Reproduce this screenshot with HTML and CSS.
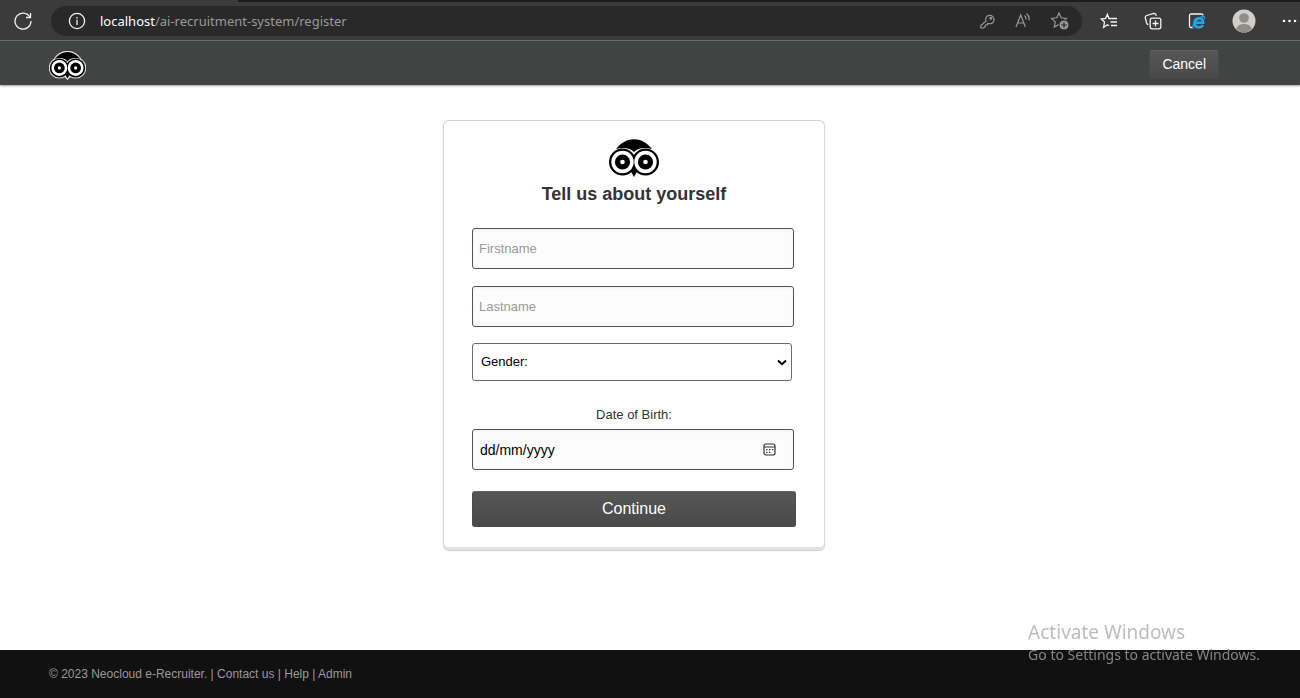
FILE: index.html
```
<!DOCTYPE html>
<html lang="en">
<head>
<meta charset="utf-8">
<title>Register</title>
<link rel="stylesheet" href="styles.css">
</head>
<body>
<svg class="defs" aria-hidden="true">
  <symbol id="owl" viewBox="0 0 50 38">
    <path d="M7 10C17 -3 33 -3 43 10C35 8 29 9 25 13C21 9 15 8 7 10Z" fill="#000"/>
    <circle cx="13.5" cy="23" r="13.5" fill="#000"/>
    <circle cx="36.5" cy="23" r="13.5" fill="#000"/>
    <path d="M21 31L25 38L29 31L25 25Z" fill="#000"/>
    <circle cx="13.5" cy="23" r="11.2" fill="#fff"/>
    <circle cx="36.5" cy="23" r="11.2" fill="#fff"/>
    <circle cx="13.5" cy="23" r="7.6" fill="#000"/>
    <circle cx="36.5" cy="23" r="7.6" fill="#000"/>
    <circle cx="13.5" cy="23" r="2.3" fill="#fff"/>
    <circle cx="36.5" cy="23" r="2.3" fill="#fff"/>
  </symbol>
</svg>
<div class="browser">
  <button class="tool reload" aria-label="Reload">
    <svg width="18" height="18" viewBox="0 0 18 18"><path d="M16 5.2A8 8 0 1 0 17 9M16.5 1v4.5H12"/></svg>
  </button>
  <div class="address">
    <svg class="info" width="18" height="18" viewBox="0 0 18 18"><circle cx="9" cy="9" r="7.6"/><path d="M9 7.7V13M9 5v1.4"/></svg>
    <span class="url"><b>localhost</b>/ai-recruitment-system/register</span>
    <button class="tool dim" aria-label="Saved passwords">
      <svg width="18" height="18" viewBox="0 0 18 18"><path d="M8 9.2A4.2 4.2 0 1 1 10.8 11.6L9.6 11.4L9.2 13H7.6L7 14.8L5.5 16H2.8V13.6Z"/><circle cx="12.8" cy="6.2" r="0.9"/></svg>
    </button>
    <button class="tool dim" aria-label="Read aloud">
      <svg width="18" height="18" viewBox="0 0 18 18"><path d="M2 15L6.7 3L11.4 15M3.7 11H9.8M10.5 3.5Q12.2 5 12 7.5M12.5 1.5Q15.7 4 15 8.3"/></svg>
    </button>
    <button class="tool dim" aria-label="Add to favorites">
      <svg width="20" height="20" viewBox="0 0 20 20"><path d="M9 2L11.2 6.8L16.4 7.4L12.7 11L13.2 15.5L9 13.4L4.3 16L5.2 10.9L1.6 7.4L6.8 6.8Z"/><circle class="badge" cx="14" cy="14" r="5"/><path class="plus" d="M14 11.2v5.6M11.2 14h5.6"/></svg>
    </button>
  </div>
  <button class="tool" aria-label="Favorites">
    <svg width="18" height="18" viewBox="0 0 18 18"><path d="M11 6.5H9L7.4 2.2L5.6 6.5L1.3 7L4.5 10L3.6 15.4L7.4 12.8L9 13.7M11.2 6.5H17M10.5 10H17M11 13.5H17"/></svg>
  </button>
  <button class="tool" aria-label="Collections">
    <svg width="18" height="18" viewBox="0 0 18 18"><rect x="6.2" y="6.2" width="10.6" height="10.6" rx="2"/><path d="M11.5 8.5v6M8.5 11.5h6M4.4 12.6Q3 12.4 2.6 11L1.3 5.8Q1 4 2.7 3.5L9.7 1.5Q11.2 1.2 11.9 2.6L12.2 3.9"/></svg>
  </button>
  <button class="tool" aria-label="Internet Explorer mode">
    <svg width="18" height="18" viewBox="0 0 18 18"><path d="M4 15.5H3Q1.5 15.5 1.5 14V3.5Q1.5 2 3 2H13.5Q15 2 15 3.5"/><path class="ie" d="M6.5 10.7H15.2Q15 6.3 11 6.3Q6.5 6.5 6.5 11Q7 15.5 11.2 15.3Q14 15 15 13"/><path class="swoosh" d="M6 16Q3.5 17 5.5 12.5Q9 6.5 14.5 4.7Q17.5 3.9 16.2 7"/></svg>
  </button>
  <button class="tool profile" aria-label="Profile">
    <svg width="24" height="24" viewBox="0 0 24 24"><circle cx="12" cy="12" r="11.5" fill="#d1cfcb"/><circle cx="12" cy="9" r="4.8" fill="#918d89"/><path d="M4 20Q6 15 12 15Q18 15 20 20Q12 27 4 20Z" fill="#918d89"/></svg>
  </button>
  <button class="tool more" aria-label="More">
    <svg width="18" height="18" viewBox="0 0 18 18"><circle cx="4" cy="9" r="1.3"/><circle cx="9.5" cy="9" r="1.3"/><circle cx="15" cy="9" r="1.3"/></svg>
  </button>
</div>
<header class="header">
  <div class="container bar">
    <a href="#" class="home" aria-label="Home">
      <svg class="logo" width="37" height="29" viewBox="-1 -1 52 41">
        <g fill="none" stroke="#ddd" stroke-width="3"><path d="M7 10C17 -3 33 -3 43 10"/><circle cx="13.5" cy="23" r="13.5"/><circle cx="36.5" cy="23" r="13.5"/><path d="M21 34L25 38L29 34"/></g>
        <use href="#owl" width="50" height="38"/>
      </svg>
    </a>
    <button class="btn cancel">Cancel</button>
  </div>
</header>
<main class="main">
  <form class="card">
    <svg class="owl" width="50" height="38"><use href="#owl"/></svg>
    <h1>Tell us about yourself</h1>
    <input class="field" type="text" placeholder="Firstname" aria-label="Firstname">
    <input class="field" type="text" placeholder="Lastname" aria-label="Lastname">
    <div class="select-box">
      <select aria-label="Gender"><option>Gender:</option><option>Male</option><option>Female</option></select>
      <svg class="chevron" width="10" height="8" viewBox="0 0 10 8"><path d="M1 1.5L5 5.2L9 1.5"/></svg>
    </div>
    <label for="dob">Date of Birth:</label>
    <div class="field date">
      <input id="dob" type="text" placeholder="dd/mm/yyyy">
      <button type="button" aria-label="Open calendar">
        <svg width="13" height="13" viewBox="0 0 13 13"><rect x="1" y="1" width="11" height="11" rx="2"/><path d="M1 4H12M3 6.7h1.4M6 6.7h1.4M9 6.7h1.4M3 9.3h1.4M6 9.3h1.4"/></svg>
      </button>
    </div>
    <button type="button" class="btn continue">Continue</button>
  </form>
</main>
<footer class="footer">
  <div class="container">© 2023 Neocloud e-Recruiter. | <a href="#">Contact us</a> | <a href="#">Help</a> | <a href="#">Admin</a></div>
</footer>
<div class="watermark"><p class="title">Activate Windows</p><p>Go to Settings to activate Windows.</p></div>
</body>
</html>
```
FILE: styles.css
```
* { box-sizing: border-box; }
body {
  margin: 0;
  min-height: 100vh;
  display: flex;
  flex-direction: column;
  background: #fff;
  color: #333;
  font: 13px/18px "Liberation Sans", Arial, sans-serif;
}
button, input, select { font: inherit; }
.defs { position: absolute; width: 0; height: 0; }

.browser {
  height: 41px;
  padding: 2px 2px 1px 14px;
  display: flex;
  align-items: center;
  gap: 26px;
  background: linear-gradient(#1c1c1c, #1c1c1c) 238px 0 / 100% 2px no-repeat, #3b3b3b;
  border-bottom: 1px solid #6d6f6e;
}
.tool {
  display: flex;
  padding: 0;
  border: 0;
  background: none;
}
.tool svg, .info { fill: none; stroke: #f2f2f2; stroke-width: 1.3; }
.dim svg { stroke: #999; stroke-width: 1.2; }
.address {
  flex: 1;
  height: 30px;
  margin: 0 -8px 0 -7px;
  padding: 0 12px 0 17px;
  display: flex;
  align-items: center;
  gap: 18px;
  border-radius: 15px;
  background: #292929;
  color: #999;
}
.url { flex: 1; margin-left: -4px; font: 13px/20px "Noto Sans", sans-serif; }
.url b { color: #fff; font-weight: 400; }
.tool .badge { fill: #999; stroke: #292929; stroke-width: 1; }
.tool .plus { stroke: #292929; }
.tool .ie { stroke: #1fa8e6; stroke-width: 2.6; }
.tool .swoosh { stroke: #1fa8e6; }
.tool.profile svg { stroke: none; }
.tool.more { margin-left: -2px; }
.tool.more svg { fill: #fff; stroke: none; }

.header {
  padding-right: 32px;
  background: #414443;
  box-shadow: 0 1px 2px rgba(0, 0, 0, .4);
}
.container { width: 100%; max-width: 1170px; margin: 0 auto; }
.bar {
  height: 44px;
  display: flex;
  align-items: center;
  justify-content: space-between;
}
.home { display: flex; padding-top: 4px; }
.btn {
  border: 1px solid #4b4b4b;
  border-top-color: #626262;
  border-radius: 3px;
  background: linear-gradient(#565656, #494949);
  color: #fff;
}
.cancel { height: 28px; margin-top: 2px; padding: 0 12px; font-size: 14px; }

.main {
  flex: 1;
  padding: 35px 32px 35px 0;
  display: flex;
  justify-content: center;
  align-items: flex-start;
}
.card {
  width: 382px;
  padding: 18px 28px 20px;
  display: flex;
  flex-direction: column;
  border: 1px solid #d4d4d4;
  border-bottom: 3px solid #e2e2e2;
  border-radius: 6px;
  box-shadow: 0 1px 1px #ccc;
}
.owl { align-self: center; }
h1 {
  margin: 4px 0 21px;
  color: #333;
  font-size: 18px;
  line-height: 26px;
  text-align: center;
}
.field {
  width: 322px;
  height: 41px;
  padding: 0 6px;
  border: 1px solid #515554;
  border-radius: 3px;
  background: #fcfcfc;
  box-shadow: inset 0 1px 3px rgba(0, 0, 0, .06);
}
input.field { margin-bottom: 17px; }
.field::placeholder { color: #999; }
.select-box { position: relative; width: 320px; margin-top: -1px; }
select {
  appearance: none;
  display: block;
  width: 100%;
  height: 38px;
  padding: 0 8px;
  border: 1px solid #6b6b6b;
  border-radius: 3px;
  background: #fff;
  color: #000;
}
.chevron {
  position: absolute;
  right: 5px;
  top: 16px;
  fill: none;
  stroke: #000;
  stroke-width: 2;
  pointer-events: none;
}
label { margin: 25px 0 5px; text-align: center; }
.date { padding: 0 17px 0 7px; display: flex; align-items: center; }
.date input {
  flex: 1;
  min-width: 0;
  padding: 0;
  border: 0;
  background: none;
  font-size: 14px;
}
.date input::placeholder { color: #000; }
.date button { display: flex; padding: 0; border: 0; background: none; }
.date svg { fill: none; stroke: #333; stroke-width: 1.2; }
.continue { height: 36px; margin-top: 21px; padding: 0; font-size: 16px; }

.footer {
  padding: 15px 32px 15px 0;
  background: #111;
  color: #999;
  font-size: 12px;
}
.footer a { color: inherit; text-decoration: none; }
.watermark {
  position: fixed;
  right: 40px;
  bottom: 33px;
  color: #858585;
  font: 14px/20px "Noto Sans", sans-serif;
}
.watermark p { margin: 0; }
.watermark .title { color: #bdbdbd; font-size: 19px; line-height: 26px; }
```
